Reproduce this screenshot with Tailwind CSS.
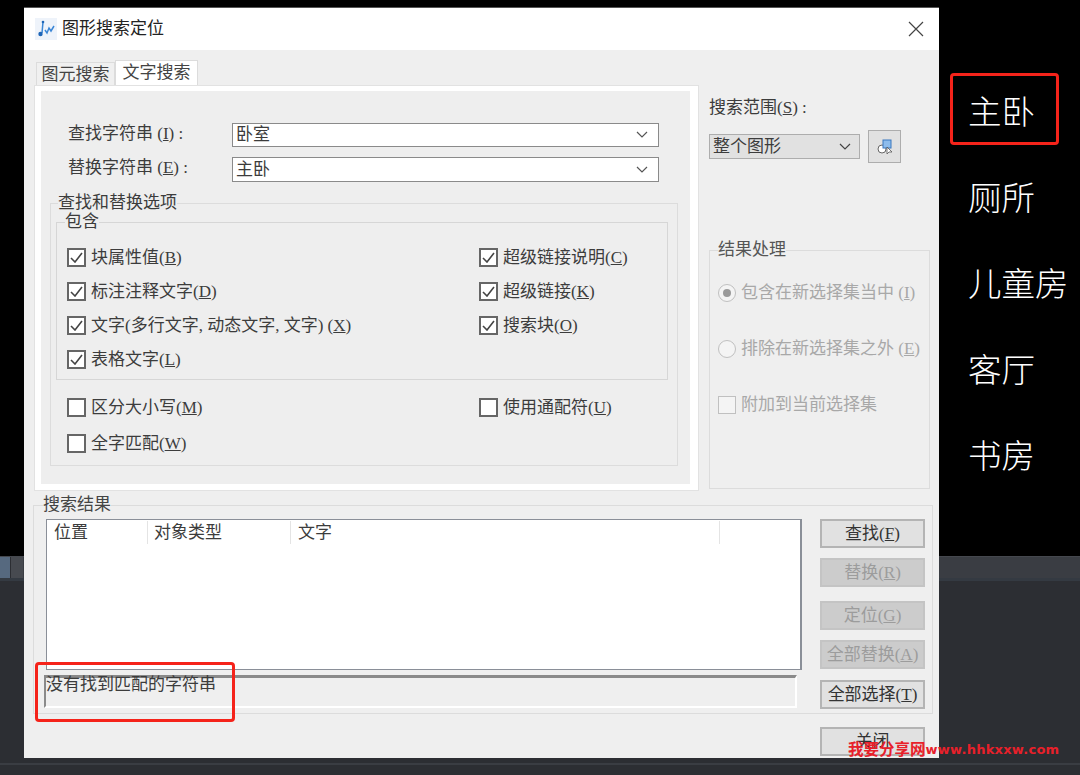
<!DOCTYPE html>
<html lang="zh-CN">

<head>
    <meta charset="UTF-8" />
    <title>图形搜索定位</title>
    <script src="https://cdn.jsdelivr.net/npm/@tailwindcss/browser@4"></script>
</head>

<body class="bg-black">
    <div class="relative w-[1080px] h-[775px] overflow-hidden bg-black flex flex-col font-['Liberation_Serif','Noto_Sans_CJK_SC',serif] text-[17px] leading-[24px] text-[#3c3c3c]">

        <!-- black drawing area, then the dark app strip below it -->
        <div class="h-[556px] shrink-0"></div>
        <div class="flex h-[22px] bg-[#3a3d43] border-t border-[#45484e]">
            <div class="w-[10px] bg-[#56697f]"></div>
            <div class="w-[1px] bg-[#2c2e33]"></div>
            <div class="w-[12px] bg-[#474a50]"></div>
        </div>
        <div class="h-[3px] bg-[#343a42]"></div>
        <div class="h-[184px] bg-[#2c2e33] border-b-2 border-[#3a3d43]"></div>
        <div class="flex-1 bg-[#2c2e33]"></div>

        <!-- dialog window -->
        <div class="absolute left-[24px] top-[7px] w-[915px] h-[751px] flex flex-col bg-[#efefef] border-t border-[#555]">
            <div class="h-[42px] shrink-0 bg-white flex items-center pl-[11px] justify-between pr-[15px]">
                <div class="flex items-center gap-[5px]">
                    <svg class="w-[22px] h-[22px]" viewBox="0 0 22 22">
                        <rect width="22" height="22" fill="#eef3fa" />
                        <path d="M8 4 L7 15 M10 12 L12 15 L14 10 L16 13 L19 8" fill="none" stroke="#3a86d6" stroke-width="1.5" />
                        <circle cx="5.5" cy="16" r="2.2" fill="#1e66b8" />
                        <circle cx="8" cy="4" r="1.3" fill="#1e66b8" />
                    </svg>
                    <span class="text-[#222]">图形搜索定位</span>
                </div>
                <svg class="w-[16px] h-[16px]" viewBox="0 0 16 16">
                    <path d="M1 1 L15 15 M15 1 L1 15" stroke="#444" stroke-width="1.2" />
                </svg>
            </div>

            <div class="flex pl-[11px] pt-[10px] h-[443px] shrink-0">
                <!-- left tabbed panel -->
                <div class="w-[663px] flex flex-col">
                    <div class="flex h-[26px] pl-[1px]">
                        <div class="w-[79px] mt-[2px] bg-[#f0f0f0] border border-b-0 border-[#dcdcdc] text-center text-[#444]">图元搜索</div>
                        <div class="w-[83px] bg-white border border-b-0 border-[#dcdcdc] text-center text-[#444]">文字搜索</div>
                    </div>
                    <div class="h-[404px] bg-[#eeeeee] border-[6px] border-t-[5px] border-r-[8px] border-white shadow-[0_0_0_1px_#e2e2e2]">
                        <div class="flex items-center h-[24px] mt-[32px]">
                            <span class="w-[191px] pl-[27px] pb-[3px]">查找字符串 (<u>I</u>) :</span>
                            <div class="w-[427px] h-[24px] bg-white border border-[#8a8a8a] flex items-center justify-between pl-[3px] pr-[10px]">
                                <span>卧室</span>
                                <svg class="w-[12px] h-[8px]" viewBox="0 0 12 8"><path d="M1 1 L6 6 L11 1" fill="none" stroke="#555" stroke-width="1.2" /></svg>
                            </div>
                        </div>
                        <div class="flex items-center h-[25px] mt-[10px]">
                            <span class="w-[191px] pl-[27px] pb-[3px]">替换字符串 (<u>E</u>) :</span>
                            <div class="w-[427px] h-[25px] bg-white border border-[#8a8a8a] flex items-center justify-between pl-[3px] pr-[10px]">
                                <span>主卧</span>
                                <svg class="w-[12px] h-[8px]" viewBox="0 0 12 8"><path d="M1 1 L6 6 L11 1" fill="none" stroke="#555" stroke-width="1.2" /></svg>
                            </div>
                        </div>

                        <fieldset class="ml-[9px] mt-[9px] w-[628px] h-[275px] border border-[#dcdcdc] pl-[5px]">
                            <legend class="ml-[2px]">查找和替换选项</legend>
                            <fieldset class="-mt-[5px] w-[612px] h-[170px] border border-[#d6d6d6] pl-[10px] pt-[6px]">
                                <legend class="-ml-[2px]">包含</legend>
                                <div class="grid grid-cols-[412px_1fr] auto-rows-[34px] items-center">
                                    <label class="flex items-center gap-[5px]">
                                        <span class="w-[19px] h-[19px] bg-white border-2 border-[#666] flex items-center justify-center"><svg class="w-[13px] h-[11px]" viewBox="0 0 13 11"><path d="M1 6 L5 10 L12 1" fill="none" stroke="#444" stroke-width="1.6" /></svg></span>
                                        <span class="mt-[1px]">块属性值(<u>B</u>)</span>
                                    </label>
                                    <label class="flex items-center gap-[5px]">
                                        <span class="w-[19px] h-[19px] bg-white border-2 border-[#666] flex items-center justify-center"><svg class="w-[13px] h-[11px]" viewBox="0 0 13 11"><path d="M1 6 L5 10 L12 1" fill="none" stroke="#444" stroke-width="1.6" /></svg></span>
                                        <span class="mt-[1px]">超级链接说明(<u>C</u>)</span>
                                    </label>
                                    <label class="flex items-center gap-[5px]">
                                        <span class="w-[19px] h-[19px] bg-white border-2 border-[#666] flex items-center justify-center"><svg class="w-[13px] h-[11px]" viewBox="0 0 13 11"><path d="M1 6 L5 10 L12 1" fill="none" stroke="#444" stroke-width="1.6" /></svg></span>
                                        <span class="mt-[1px]">标注注释文字(<u>D</u>)</span>
                                    </label>
                                    <label class="flex items-center gap-[5px]">
                                        <span class="w-[19px] h-[19px] bg-white border-2 border-[#666] flex items-center justify-center"><svg class="w-[13px] h-[11px]" viewBox="0 0 13 11"><path d="M1 6 L5 10 L12 1" fill="none" stroke="#444" stroke-width="1.6" /></svg></span>
                                        <span class="mt-[1px]">超级链接(<u>K</u>)</span>
                                    </label>
                                    <label class="flex items-center gap-[5px]">
                                        <span class="w-[19px] h-[19px] bg-white border-2 border-[#666] flex items-center justify-center"><svg class="w-[13px] h-[11px]" viewBox="0 0 13 11"><path d="M1 6 L5 10 L12 1" fill="none" stroke="#444" stroke-width="1.6" /></svg></span>
                                        <span class="mt-[1px]">文字(多行文字, 动态文字, 文字) (<u>X</u>)</span>
                                    </label>
                                    <label class="flex items-center gap-[5px]">
                                        <span class="w-[19px] h-[19px] bg-white border-2 border-[#666] flex items-center justify-center"><svg class="w-[13px] h-[11px]" viewBox="0 0 13 11"><path d="M1 6 L5 10 L12 1" fill="none" stroke="#444" stroke-width="1.6" /></svg></span>
                                        <span class="mt-[1px]">搜索块(<u>O</u>)</span>
                                    </label>
                                    <label class="flex items-center gap-[5px]">
                                        <span class="w-[19px] h-[19px] bg-white border-2 border-[#666] flex items-center justify-center"><svg class="w-[13px] h-[11px]" viewBox="0 0 13 11"><path d="M1 6 L5 10 L12 1" fill="none" stroke="#444" stroke-width="1.6" /></svg></span>
                                        <span class="mt-[1px]">表格文字(<u>L</u>)</span>
                                    </label>
                                </div>
                            </fieldset>
                            <div class="grid grid-cols-[412px_1fr] auto-rows-[36px] items-center mt-[9px] pl-[11px]">
                                <label class="flex items-center gap-[5px]">
                                    <span class="w-[19px] h-[19px] bg-white border-2 border-[#666]"></span>
                                    <span class="mt-[1px]">区分大小写(<u>M</u>)</span>
                                </label>
                                <label class="flex items-center gap-[5px]">
                                    <span class="w-[19px] h-[19px] bg-white border-2 border-[#666]"></span>
                                    <span class="mt-[1px]">使用通配符(<u>U</u>)</span>
                                </label>
                                <label class="flex items-center gap-[5px]">
                                    <span class="w-[19px] h-[19px] bg-white border-2 border-[#666]"></span>
                                    <span class="mt-[1px]">全字匹配(<u>W</u>)</span>
                                </label>
                            </div>
                        </fieldset>
                    </div>
                </div>

                <!-- right column -->
                <div class="ml-[11px] w-[221px]">
                    <div class="mt-[36px] h-[24px]">搜索范围(<u>S</u>) :</div>
                    <div class="mt-[10px] flex items-center gap-[8px]">
                        <div class="w-[151px] h-[25px] bg-[#e1e1e1] border border-[#adadad] flex items-center justify-between pl-[3px] pr-[8px]">
                            <span>整个图形</span>
                            <svg class="w-[12px] h-[8px]" viewBox="0 0 12 8"><path d="M1 1 L6 6 L11 1" fill="none" stroke="#444" stroke-width="1.2" /></svg>
                        </div>
                        <div class="w-[33px] h-[33px] bg-[#e1e1e1] border border-[#adadad] flex items-center justify-center">
                            <svg class="w-[16px] h-[16px]" viewBox="0 0 16 16">
                                <circle cx="5" cy="10" r="4" fill="#fff" stroke="#666" />
                                <rect x="6" y="1" width="8" height="8" fill="#8dbcec" stroke="#3a78bf" />
                                <path d="M10 8 L10 15 L12 13 L15 13 Z" fill="#fff" stroke="#555" stroke-width="0.8" />
                            </svg>
                        </div>
                    </div>
                    <fieldset class="mt-[75px] h-[251px] border border-[#dcdcdc] pl-[8px] text-[#a8a8a8]">
                        <legend class="ml-[0px] text-[#555]">结果处理</legend>
                        <label class="flex items-center gap-[5px] mt-[19px] h-[24px]">
                            <span class="w-[18px] h-[18px] rounded-full bg-[#f4f4f4] border border-[#c0c0c0] flex items-center justify-center"><span class="w-[8px] h-[8px] rounded-full bg-[#9a9a9a]"></span></span>
                            <span>包含在新选择集当中 (<u>I</u>)</span>
                        </label>
                        <label class="flex items-center gap-[5px] mt-[32px] h-[24px]">
                            <span class="w-[18px] h-[18px] rounded-full bg-[#f4f4f4] border border-[#c0c0c0]"></span>
                            <span>排除在新选择集之外 (<u>E</u>)</span>
                        </label>
                        <label class="flex items-center gap-[5px] mt-[32px] h-[24px]">
                            <span class="w-[18px] h-[18px] bg-[#f4f4f4] border border-[#c0c0c0]"></span>
                            <span>附加到当前选择集</span>
                        </label>
                    </fieldset>
                </div>
            </div>

            <!-- results group -->
            <fieldset class="ml-[9px] w-[900px] h-[221px] border border-[#dcdcdc] pl-[12px] shrink-0">
                <legend class="-ml-[3px] text-[#444]">搜索结果</legend>
                <div class="flex pt-[2px]">
                    <div class="w-[756px] shrink-0">
                        <div class="h-[151px] bg-white border border-[#8a8f98] border-r-2">
                            <div class="flex h-[24px] pt-[1px]">
                                <div class="w-[101px] pl-[7px] border-r border-[#e4e4e4]">位置</div>
                                <div class="w-[143px] pl-[6px] border-r border-[#e4e4e4]">对象类型</div>
                                <div class="w-[429px] pl-[7px] border-r border-[#e4e4e4]">文字</div>
                            </div>
                        </div>
                        <div class="-ml-[2px] mt-[5px] w-[753px] h-[33px] border-t-[3px] border-l-2 border-[#8a8a8a] border-r-2 border-r-white border-b-2 border-b-white">
                            <span class="block -mt-[5px]">没有找到匹配的字符串</span>
                        </div>
                    </div>
                    <div class="ml-[18px] w-[105px] shrink-0 flex flex-col">
                        <div class="h-[29px] bg-[#e1e1e1] border-2 border-[#b4b4b4] flex items-center justify-center text-[#333]"><span>查找(<u>F</u>)</span></div>
                        <div class="mt-[10px] h-[29px] bg-[#cccccc] border-2 border-[#c4c4c4] flex items-center justify-center text-[#9c9c9c]"><span>替换(<u>R</u>)</span></div>
                        <div class="mt-[14px] h-[29px] bg-[#cccccc] border-2 border-[#c4c4c4] flex items-center justify-center text-[#9c9c9c]"><span>定位(<u>G</u>)</span></div>
                        <div class="mt-[10px] h-[29px] bg-[#cccccc] border-2 border-[#c4c4c4] flex items-center justify-center text-[#9c9c9c]"><span>全部替换(<u>A</u>)</span></div>
                        <div class="mt-[11px] h-[29px] bg-[#e1e1e1] border-2 border-[#b4b4b4] flex items-center justify-center text-[#333]"><span>全部选择(<u>T</u>)</span></div>
                    </div>
                </div>
            </fieldset>

            <div class="mt-[13px] ml-[796px] w-[105px] h-[29px] bg-[#e1e1e1] border-2 border-[#b4b4b4] flex items-center justify-center text-[#333]">关闭</div>
        </div>

        <!-- room names on the drawing -->
        <div class="absolute left-[968px] top-[83px] flex flex-col gap-[26px] text-[33.5px] leading-[60px] text-white whitespace-nowrap font-extralight">
            <span>主卧</span>
            <span>厕所</span>
            <span>儿童房</span>
            <span>客厅</span>
            <span>书房</span>
        </div>

        <!-- red annotations -->
        <div class="absolute left-[950px] top-[73px] w-[109px] h-[72px] border-[3px] border-[#f5231a] rounded-[4px]"></div>
        <div class="absolute left-[35px] top-[662px] w-[200px] h-[60px] border-[3px] border-[#f5231a] rounded-[4px]"></div>

        <!-- watermark -->
        <div class="absolute left-[848px] top-[739px] h-[22px] leading-[22px] flex items-center whitespace-nowrap font-bold text-[#e8202a] text-[15.5px] font-['DejaVu_Sans','Noto_Sans_CJK_SC',sans-serif]">
            <span>我要分享网</span><span class="text-[13px] tracking-[0.25px]">www.hhkxxw.com</span>
        </div>
    </div>
</body>

</html>
